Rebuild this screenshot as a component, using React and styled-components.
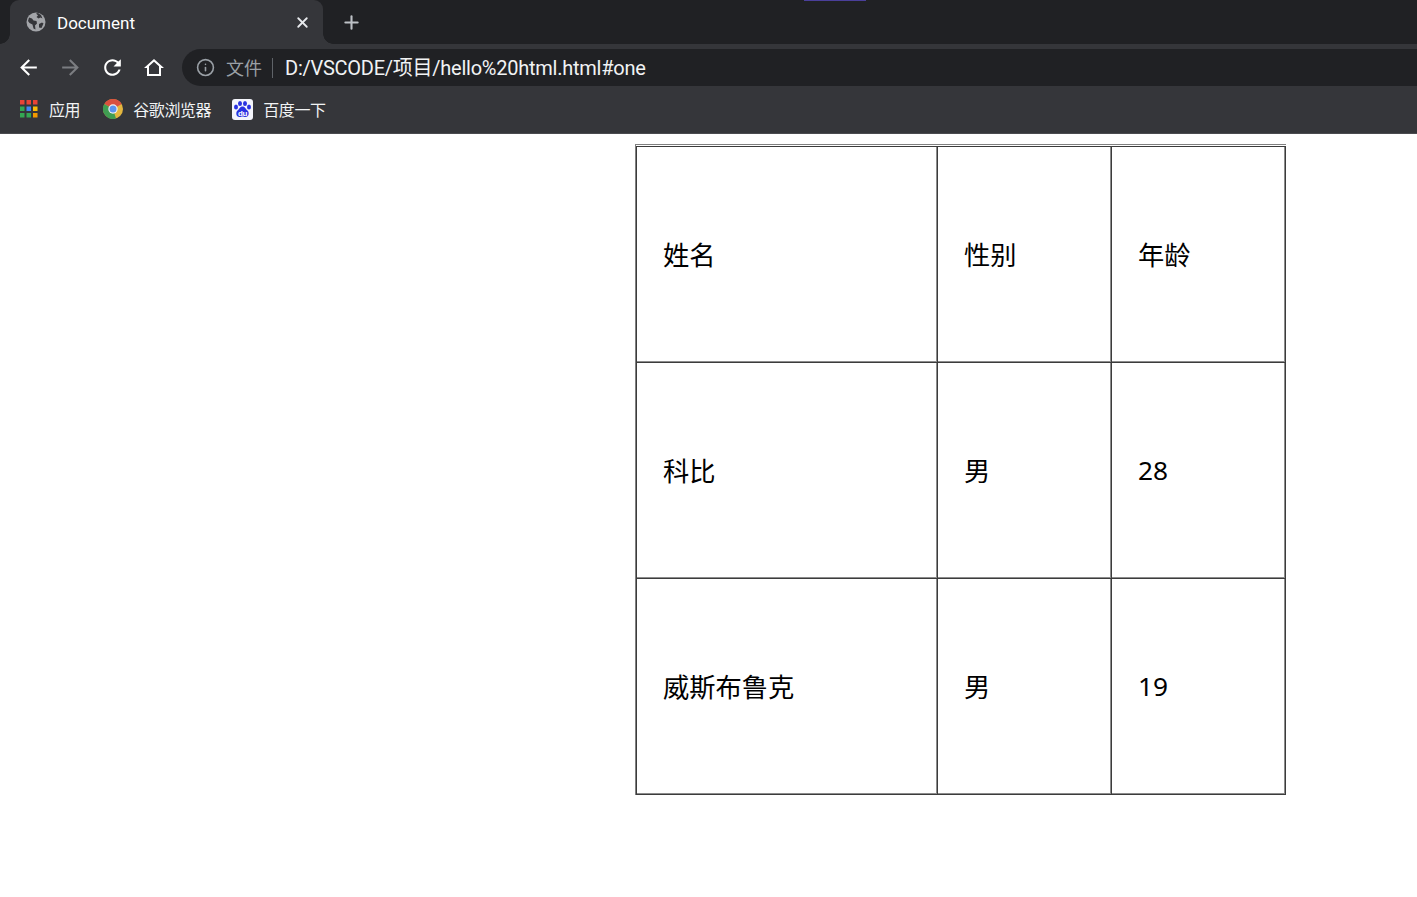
import React from "react";
import styled, { createGlobalStyle } from "styled-components";
import { X, Plus, Info } from "lucide-react";

const UI_FONT = `Roboto, "Noto Sans CJK SC", sans-serif`;

const Global = createGlobalStyle`
  html, body { margin: 0; padding: 0; background: #ffffff; }
  body { overflow: hidden; font-family: ${UI_FONT}; }
`;

const rows = [
  ["姓名", "性别", "年龄"],
  ["科比", "男", "28"],
  ["威斯布鲁克", "男", "19"],
];

const GlobeIcon = () => (
  <svg width="20" height="20" viewBox="0 0 20 20">
    <circle cx="10" cy="10" r="9.5" fill="#a3a5a9" />
    <path d="M3 5.500l3 1 1.500 2 3 .5.5 2.500-2 2 .5 4-2-1-1-4-3-1.500-1.500-2z" fill="#35363a" />
    <path d="M10 1.500l2 2-1.500 1.500 2 1.500 2-1 2 1-1.500-3.500-3-2zM13 12l3-1.500 1.500 1-2 4.500-2.500-.5z" fill="#35363a" />
  </svg>
);

const ToolIcon = ({ d, size = 25 }) => (
  <svg width={size} height={size} viewBox="0 0 24 24" fill="currentColor">
    <path fillRule="evenodd" d={d} />
  </svg>
);

const BACK = "M20 11H7.830l5.590-5.590L12 4l-8 8 8 8 1.410-1.410L7.830 13H20v-2z";
const FORWARD = "M12 4l-1.410 1.410L16.170 11H4v2h12.170l-5.580 5.590L12 20l8-8z";
const RELOAD = "M17.650 6.350C16.200 4.900 14.210 4 12 4c-4.420 0-7.990 3.580-7.990 8s3.570 8 7.990 8c3.730 0 6.840-2.550 7.730-6h-2.080c-.82 2.330-3.040 4-5.650 4-3.310 0-6-2.690-6-6s2.690-6 6-6c1.660 0 3.140.69 4.220 1.780L13 11h7V4l-2.350 2.350z";
const HOME = "M12 3L2 12h3v8h14v-8h3L12 3zM12 5.690l5 4.500V18H7v-7.810l5-4.500z";

const AppsIcon = () => {
  const colors = ["#ea4335", "#ea4335", "#ea4335", "#34a853", "#4285f4", "#fbbc05", "#34a853", "#34a853", "#f29900"];
  return (
    <svg width="18" height="18" viewBox="0 0 18 18">
      {colors.map((c, i) => (
        <rect key={i} x={(i % 3) * 6.5} y={Math.floor(i / 3) * 6.5} width="4.500" height="4.500" fill={c} />
      ))}
    </svg>
  );
};

const ChromeIcon = () => (
  <svg width="20" height="20" viewBox="0 0 20 20">
    <circle cx="10" cy="10" r="10" fill="#e3b63f" />
    <path d="M10 10L1.340 5A10 10 0 0 1 18.660 5z" fill="#d9503f" />
    <path d="M1.340 5L10 10l3 9.500A10 10 0 0 1 1.340 5z" fill="#3f9d52" />
    <circle cx="10" cy="10" r="4.700" fill="#f1f1f1" />
    <circle cx="10" cy="10" r="3.500" fill="#5b93ee" />
  </svg>
);

const BaiduIcon = () => (
  <svg width="21" height="21" viewBox="0 0 21 21">
    <rect width="21" height="21" rx="3" fill="#f4f5fb" />
    <g fill="#2932e1">
      <ellipse cx="4" cy="8" rx="2" ry="2.500" />
      <ellipse cx="8" cy="4.500" rx="2" ry="2.600" />
      <ellipse cx="13" cy="4.500" rx="2" ry="2.600" />
      <ellipse cx="17" cy="8" rx="2" ry="2.500" />
      <path d="M10.500 7.500c2.500 0 3 2.500 5 4 2 1.700 1.500 6.500-2 6.500-1.500 0-2-.5-3-.5s-1.500.5-3 .5c-3.500 0-4-4.800-2-6.500 2-1.500 2.500-4 5-4z" />
    </g>
    <text x="10.500" y="17" textAnchor="middle" fontSize="8" fontWeight="700" fontFamily="Liberation Sans, sans-serif" fill="#ffffff">du</text>
  </svg>
);

export default function App() {
  return (
    <>
      <Global />
      <Browser>
        <TabStrip>
          <ActiveTab>
            <GlobeIcon />
            <TabTitle>Document</TabTitle>
            <TabClose><X size={17} strokeWidth={2.6} /></TabClose>
          </ActiveTab>
          <NewTab><Plus size={21} strokeWidth={2.4} /></NewTab>
          <CaptureMark />
        </TabStrip>
        <Toolbar>
          <NavButton><ToolIcon d={BACK} /></NavButton>
          <NavButton $disabled><ToolIcon d={FORWARD} /></NavButton>
          <NavButton><ToolIcon d={RELOAD} /></NavButton>
          <NavButton><ToolIcon d={HOME} size={24} /></NavButton>
          <Omnibox>
            <Info size={19} strokeWidth={2} color="#9aa0a6" />
            <Scheme>文件</Scheme>
            <Divider />
            <Url>D:/VSCODE/项目/hello%20html.html#one</Url>
          </Omnibox>
        </Toolbar>
        <Bookmarks>
          <AppsBookmark><AppsIcon /><span>应用</span></AppsBookmark>
          <Bookmark><ChromeIcon /><span>谷歌浏览器</span></Bookmark>
          <Bookmark><BaiduIcon /><span>百度一下</span></Bookmark>
        </Bookmarks>
      </Browser>
      <Page>
        <Table>
          <tbody>
            {rows.map((row, i) => (
              <tr key={i}>
                {row.map((cell, j) => (
                  <Cell key={j} $col={j}>{cell}</Cell>
                ))}
              </tr>
            ))}
          </tbody>
        </Table>
      </Page>
    </>
  );
}

const Browser = styled.div`
  display: flex;
  flex-direction: column;
  background: #35363a;
  color: #ffffff;
`;
const TabStrip = styled.div`
  position: relative;
  display: flex;
  align-items: flex-end;
  height: 44px;
  padding-left: 10px;
  background: #202124;
`;
const ActiveTab = styled.div`
  position: relative;
  box-sizing: border-box;
  display: flex;
  align-items: center;
  width: 313px;
  height: 44px;
  padding: 0 12px 0 16px;
  background: #35363a;
  border-radius: 9px 9px 0 0;
  &::before, &::after {
    content: "";
    position: absolute;
    bottom: 0;
    width: 10px;
    height: 10px;
  }
  &::before {
    left: -10px;
    background: radial-gradient(circle at 0 0, #202124 9.500px, #35363a 10px);
  }
  &::after {
    right: -10px;
    background: radial-gradient(circle at 100% 0, #202124 9.500px, #35363a 10px);
  }
`;
const TabTitle = styled.div`
  flex: 1;
  margin: 2px 0 0 11px;
  font-size: 17px;
  color: #ffffff;
`;
const TabClose = styled.div`
  display: flex;
  color: #e8eaed;
`;
const NewTab = styled.div`
  display: flex;
  margin: 0 0 11px 18px;
  color: #bdc1c6;
`;
const CaptureMark = styled.div`
  position: absolute;
  top: 0;
  left: 804px;
  width: 62px;
  height: 1px;
  background: #4a3f9a;
`;
const Toolbar = styled.div`
  display: flex;
  align-items: center;
  height: 37px;
  margin-top: 5px;
  padding-left: 7px;
`;
const NavButton = styled.div`
  display: flex;
  align-items: center;
  justify-content: center;
  width: 42px;
  height: 37px;
  color: ${(props) => (props.$disabled ? "#7b7d81" : "#ffffff")};
  &:nth-child(4) { width: 41px; }
`;
const Omnibox = styled.div`
  flex: 1;
  display: flex;
  align-items: center;
  height: 37px;
  margin-left: 8px;
  padding-left: 14px;
  background: #202124;
  border-radius: 19px 0 0 19px;
`;
const Scheme = styled.span`
  margin: -1px 0 0 11px;
  font-size: 18px;
  color: #9aa0a6;
`;
const Divider = styled.span`
  width: 1px;
  height: 20px;
  margin: 0 12px 0 10px;
  background: #5f6368;
`;
const Url = styled.span`
  margin-top: -2px;
  font-size: 20px;
  letter-spacing: -0.25px;
  color: #f1f3f4;
`;
const Bookmarks = styled.div`
  box-sizing: border-box;
  display: flex;
  align-items: center;
  gap: 21px;
  height: 48px;
  padding: 0 0 1px 20px;
  border-bottom: 1px solid #4a4b4f;
`;
const Bookmark = styled.div`
  display: flex;
  align-items: center;
  gap: 10px;
  font-size: 16px;
  letter-spacing: -0.4px;
  color: #f1f3f4;
`;
const AppsBookmark = styled(Bookmark)`
  gap: 11px;
  padding-right: 2px;
`;
const Page = styled.div`
  padding: 10px 0 0 635px;
`;
const Table = styled.table`
  box-sizing: border-box;
  width: 650px;
  height: 651px;
  padding-top: 1px;
  border-collapse: separate;
  border-spacing: 0;
  border-top: 1px solid #808080;
  border-left: 1px solid #808080;
  table-layout: fixed;
`;
const Cell = styled.td`
  box-sizing: border-box;
  width: ${(props) => (props.$col === 0 ? "301px" : "174px")};
  height: 216px;
  padding: 0 0 2px 26px;
  border-style: solid;
  border-color: #3c3c3c;
  border-width: 0 1px 1px 0;
  box-shadow: inset -1px -1px 0 #8c8c8c;
  font-family: "Noto Sans", "Noto Sans CJK SC", sans-serif;
  font-size: 26.25px;
  color: #000000;
  tr:first-child & { border-top-width: 1px; height: 217px; }
  &:first-child { border-left-width: 1px; width: 302px; }
`;
